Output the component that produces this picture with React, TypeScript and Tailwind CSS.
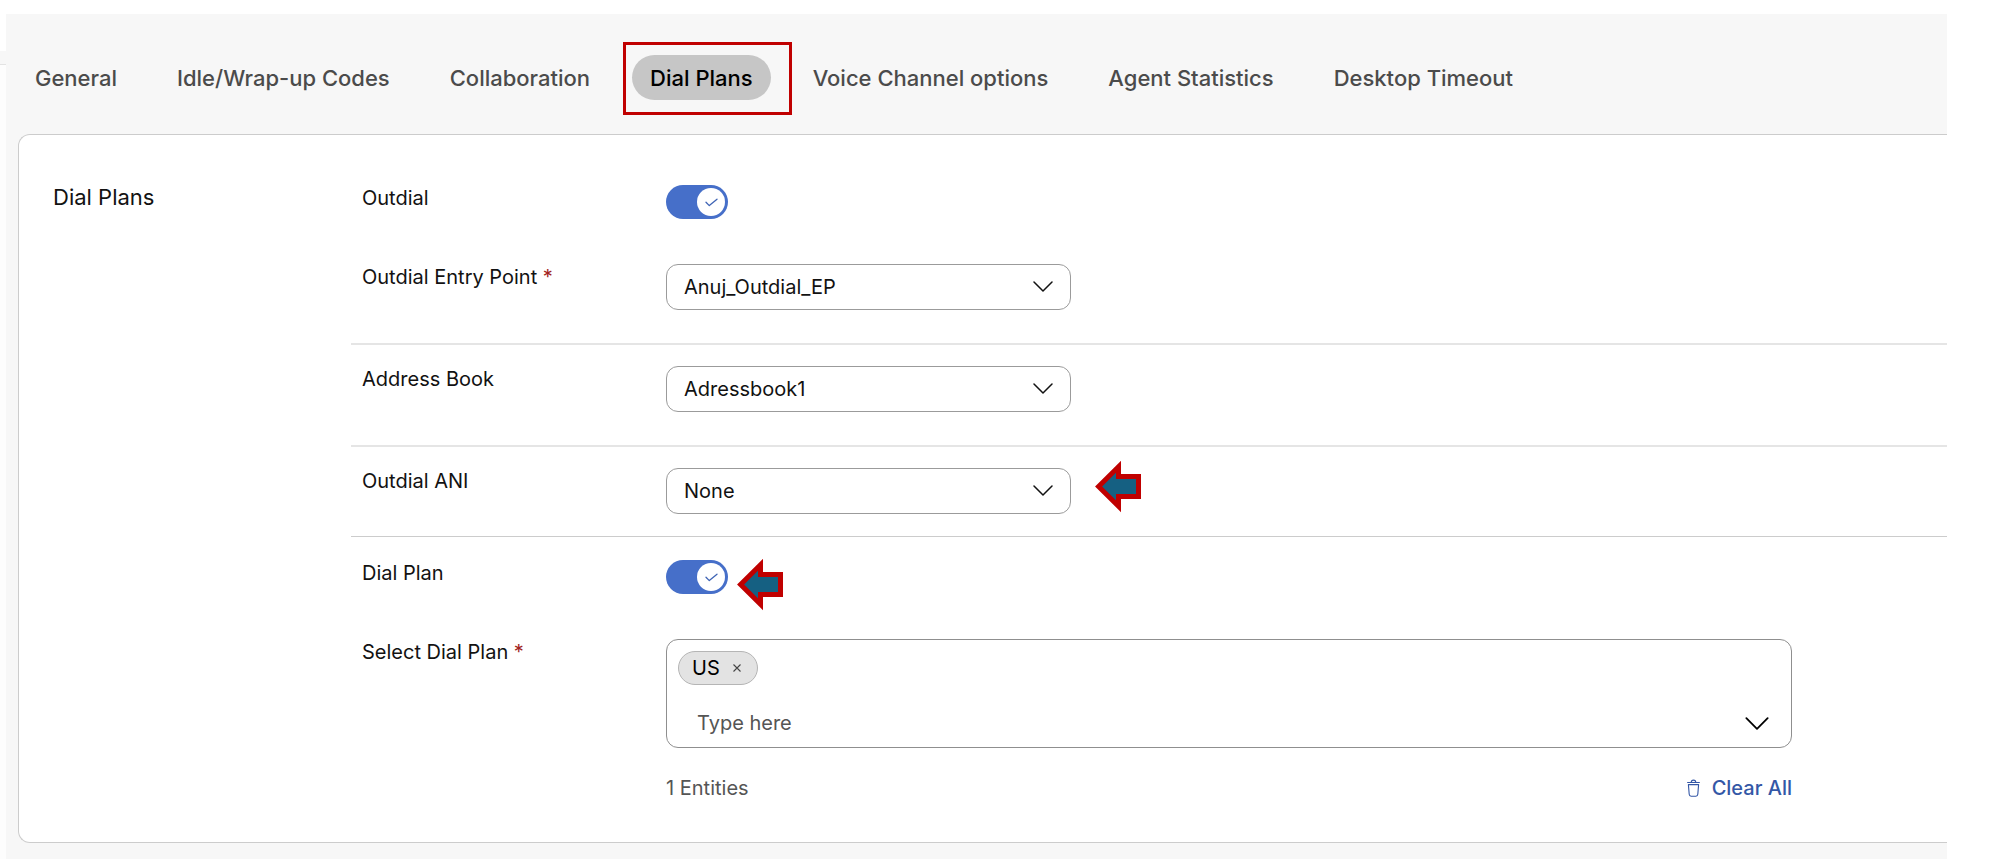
import { useState, type ReactNode } from "react";

const TABS = [
  "General",
  "Idle/Wrap-up Codes",
  "Collaboration",
  "Dial Plans",
  "Voice Channel options",
  "Agent Statistics",
  "Desktop Timeout",
];

function Chevron({ className }: { className: string }) {
  return (
    <svg viewBox="0 0 20 11" fill="none" stroke="currentColor" strokeWidth="1.5" aria-hidden="true" className={className}>
      <path d="M1 1l9 9 9-9" strokeLinecap="round" strokeLinejoin="round" />
    </svg>
  );
}

function CalloutArrow({ className }: { className: string }) {
  return (
    <svg width="46" height="52" viewBox="0 0 46 52" aria-hidden="true" className={className}>
      <path
        d="M3.6 25.5L23.5 5.800V15.500H43.500V35.500H23.500V45.200Z"
        fill="#156082"
        stroke="#c00000"
        strokeWidth="5"
        strokeMiterlimit="10"
      />
    </svg>
  );
}

function Row({ label, htmlFor, required, children }: { label: string; htmlFor: string; required?: boolean; children: ReactNode }) {
  return (
    <div className="flex items-start pl-[11px]">
      <label htmlFor={htmlFor} className="w-[304px] shrink-0 text-xl leading-7">
        {label}
        {required && <span className="text-[#a12222]"> *</span>}
      </label>
      <div className="min-w-0 flex-1 pt-px">{children}</div>
    </div>
  );
}

function Toggle({ id }: { id: string }) {
  const [on, setOn] = useState(true);
  return (
    <span className="relative block h-[34px] w-[62px]">
      <input
        id={id}
        type="checkbox"
        role="switch"
        checked={on}
        onChange={(e) => setOn(e.target.checked)}
        className="block h-full w-full cursor-pointer appearance-none rounded-full bg-gray-400 checked:bg-[#466fc9]"
      />
      <span
        className={
          on
            ? "pointer-events-none absolute top-[3px] right-[3px] flex size-7 items-center justify-center rounded-full bg-white"
            : "pointer-events-none absolute top-[3px] left-[3px] size-7 rounded-full bg-white"
        }
      >
        {on && (
          <svg width="13" height="9" viewBox="0 0 13 9" fill="none" stroke="#3f64b5" strokeWidth="1.3" aria-hidden="true">
            <path d="M1 4.200l3.300 3.400L12 1.200" strokeLinecap="round" strokeLinejoin="round" />
          </svg>
        )}
      </span>
    </span>
  );
}

function Select({ id, options }: { id: string; options: string[] }) {
  return (
    <div className="relative w-[405px]">
      <select
        id={id}
        className="block h-[46px] w-full appearance-none rounded-xl border border-[#9b9b9b] bg-white pr-14 pl-[17px] text-xl leading-7"
      >
        {options.map((o) => (
          <option key={o}>{o}</option>
        ))}
      </select>
      <Chevron className="pointer-events-none absolute top-[17px] right-[18px] h-[11px] w-5" />
    </div>
  );
}

export default function App() {
  const [active, setActive] = useState("Dial Plans");
  const [plans, setPlans] = useState(["US"]);

  return (
    <div className="flex min-h-screen bg-white pr-11 font-['Inter',sans-serif] text-[#121212]">
      <div className="w-[6px] shrink-0 bg-[#fdfdfd]">
        <div className="h-[51px] bg-white" />
        <div className="h-[14px] border-b border-[#e3e3e3] bg-[#f7f7f7]" />
      </div>

      <div className="flex min-w-0 flex-1 flex-col pt-[14px]">
        <main className="flex flex-1 flex-col bg-[#f7f7f7] pb-4">
          <nav className="flex gap-6 pt-[41px] pb-[34px] pl-[11px]">
            {TABS.map((tab) => (
              <div key={tab} className="relative">
                <button
                  type="button"
                  aria-current={tab === active ? "page" : undefined}
                  onClick={() => setActive(tab)}
                  className={
                    tab === active
                      ? "h-[45px] rounded-full bg-[#c6c6c6] px-[18px] text-[22px] leading-7 font-medium whitespace-nowrap text-black"
                      : "h-[45px] rounded-full px-[18px] text-[22px] leading-7 font-medium whitespace-nowrap text-[#4b4b4b]"
                  }
                >
                  {tab}
                </button>
                {tab === "Dial Plans" && (
                  <span className="pointer-events-none absolute -top-[13px] -right-[21px] -bottom-[15px] -left-[9px] border-3 border-[#c00000]" />
                )}
              </div>
            ))}
          </nav>

          <section className="ml-3 flex flex-1 rounded-l-xl border border-r-0 border-[#cccccc] bg-white pl-[34px]">
            <h2 className="w-[298px] shrink-0 pt-12 text-[22px] leading-7">Dial Plans</h2>

            <form className="min-w-0 flex-1" onSubmit={(e) => e.preventDefault()}>
              <div className="border-b-2 border-[#e5e5e5] pt-[49px] pb-[33px]">
                <div className="pb-11">
                  <Row label="Outdial" htmlFor="outdial">
                    <Toggle id="outdial" />
                  </Row>
                </div>
                <Row label="Outdial Entry Point" htmlFor="entry-point" required>
                  <Select id="entry-point" options={["Anuj_Outdial_EP"]} />
                </Row>
              </div>

              <div className="border-b-2 border-[#e5e5e5] pt-5 pb-[33px]">
                <Row label="Address Book" htmlFor="address-book">
                  <Select id="address-book" options={["Adressbook1", "None"]} />
                </Row>
              </div>

              <div className="border-b border-[#cccccc] pt-5 pb-[22px]">
                <div className="relative">
                  <Row label="Outdial ANI" htmlFor="outdial-ani">
                    <Select id="outdial-ani" options={["None"]} />
                  </Row>
                  <CalloutArrow className="pointer-events-none absolute top-[-6px] left-[744px]" />
                </div>
              </div>

              <div className="pt-[22px]">
                <div className="relative pb-11">
                  <Row label="Dial Plan" htmlFor="dial-plan">
                    <Toggle id="dial-plan" />
                  </Row>
                  <CalloutArrow className="pointer-events-none absolute top-0 left-[386px]" />
                </div>
                <Row label="Select Dial Plan" htmlFor="dial-plan-search" required>
                  <div className="mr-[155px]">
                    <div className="rounded-xl border border-[#8f8f8f] bg-white pt-[11px] pr-[22px] pb-[10px] pl-[11px]">
                      <div className="flex h-[34px] gap-2">
                        {plans.map((p) => (
                          <span
                            key={p}
                            className="flex items-center gap-[13px] rounded-full border border-[#b5b5b5] bg-[#e3e3e3] pr-4 pl-[13px] text-xl leading-7 text-black"
                          >
                            {p}
                            <button
                              type="button"
                              aria-label={`Remove ${p}`}
                              onClick={() => setPlans(plans.filter((x) => x !== p))}
                            >
                              <svg width="8" height="8" viewBox="0 0 8 8" stroke="#444444" strokeWidth="1.1" aria-hidden="true">
                                <path d="M0.5 0.5l7 7M7.5 0.5l-7 7" />
                              </svg>
                            </button>
                          </span>
                        ))}
                      </div>
                      <div className="flex items-center pt-6 pl-[19px]">
                        <input
                          id="dial-plan-search"
                          placeholder="Type here"
                          className="min-w-0 flex-1 text-xl leading-7 outline-none placeholder:text-[#555555]"
                        />
                        <button type="button" aria-label="Show dial plans" className="text-black">
                          <Chevron className="h-[13px] w-6" />
                        </button>
                      </div>
                    </div>
                    <div className="flex items-center justify-between pt-[26px] pb-10 text-xl leading-7">
                      <span className="text-[#555555]">{plans.length} Entities</span>
                      <button
                        type="button"
                        onClick={() => setPlans([])}
                        className="flex items-center gap-3 font-medium text-[#3457a6]"
                      >
                        <svg width="13" height="18" viewBox="0 0 13 18" fill="none" stroke="currentColor" strokeWidth="1.1" aria-hidden="true">
                          <path d="M0.600 3.500h11.800M4.200 3.500c0-3.200 4.600-3.200 4.600 0M1.400 5.600h10.200l-.8 9.700c-.1 1.200-.8 1.900-1.900 1.900H4.100c-1.100 0-1.800-.7-1.900-1.900z" strokeLinecap="round" strokeLinejoin="round" />
                        </svg>
                        Clear All
                      </button>
                    </div>
                  </div>
                </Row>
              </div>
            </form>
          </section>
        </main>
      </div>
    </div>
  );
}
